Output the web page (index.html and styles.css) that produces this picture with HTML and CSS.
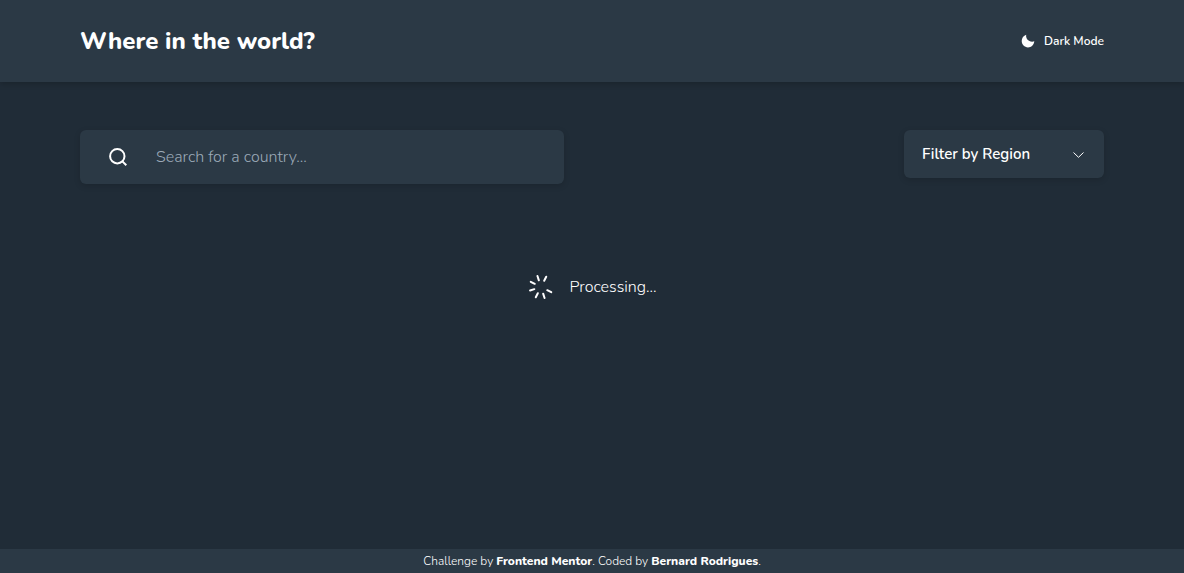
FILE: index.html
```html
<!DOCTYPE html>
<html lang="en">
<head>
<meta charset="utf-8">
<meta name="viewport" content="width=device-width, initial-scale=1">
<title>Where in the world?</title>
<link rel="stylesheet" href="styles.css">
</head>
<body class="page">
<header class="header">
  <h1 class="title">Where in the world?</h1>
  <button class="mode" type="button">
    <svg class="mode-icon" viewBox="0 0 14 14" aria-hidden="true"><path fill="currentColor" d="M5.200.8C4.700 3.300 5.800 5.800 8 6.800C9.800 7.800 11.600 7.900 13.300 7.300C13 11 10.300 13.400 7 13.400C3.500 13.400.7 10.600.7 7.100C.7 4.200 2.600 1.600 5.200.8Z"/></svg>
    Dark Mode
  </button>
</header>
<main class="main">
  <div class="filters">
    <label class="search">
      <svg class="search-icon" viewBox="0 0 20 20" aria-hidden="true"><g fill="none" stroke="currentColor" stroke-width="2"><circle cx="9.300" cy="9.200" r="7.200"/><path d="M14.400 14.400L18.300 18.300"/></g></svg>
      <input class="search-input" type="text" placeholder="Search for a country..." aria-label="Search for a country">
    </label>
    <div class="region">
      <select class="region-select" aria-label="Filter by Region">
        <option>Filter by Region</option>
        <option>Africa</option>
        <option>Americas</option>
        <option>Asia</option>
        <option>Europe</option>
        <option>Oceania</option>
      </select>
      <svg class="region-icon" viewBox="0 0 12 12" aria-hidden="true"><path d="M1.500 4.500L6.500 9.300L11.500 4.500" fill="none" stroke="currentColor"/></svg>
    </div>
  </div>
  <div class="loading" role="status">
    <svg class="spinner" viewBox="-14 -14 28 28" aria-hidden="true">
      <g stroke="currentColor" stroke-width="2" stroke-linecap="round">
        <path d="M0-7V-11.500" transform="rotate(27)"/>
        <path d="M0-7V-11.500" transform="rotate(117)"/>
        <path d="M0-7V-11.500" transform="rotate(162)"/>
        <path d="M0-7V-11.500" transform="rotate(207)"/>
        <path d="M0-7V-11.500" transform="rotate(252)"/>
        <path d="M0-7V-11.500" transform="rotate(297)"/>
        <path d="M0-7V-11.500" transform="rotate(342)"/>
      </g>
    </svg>
    <span>Processing...</span>
  </div>
</main>
<footer class="footer">
  <p class="credit">Challenge by <a class="credit-link" href="#mentor">Frontend Mentor</a>. Coded by <a class="credit-link" href="#author">Bernard Rodrigues</a>.</p>
</footer>
</body>
</html>
```
FILE: styles.css
```css
*, *::before, *::after {
  box-sizing: border-box;
}

.page {
  display: flex;
  flex-direction: column;
  min-height: 100vh;
  margin: 0;
  background: #202c37;
  color: #fff;
  font: 300 16px/24px Nunito, Lato, sans-serif;
}

.header {
  display: flex;
  align-items: center;
  justify-content: space-between;
  padding: 25px 80px;
  background: #2b3945;
  box-shadow: 0 2px 6px rgba(0, 0, 0, 0.2);
}

.title {
  margin: 0;
  font-size: 24px;
  line-height: 32px;
  font-weight: 800;
}

.mode {
  display: flex;
  align-items: center;
  gap: 9px;
  padding: 0;
  border: 0;
  background: none;
  color: inherit;
  font: inherit;
  font-size: 12px;
  font-weight: 600;
}

.mode-icon {
  width: 14px;
  height: 14px;
}

.main {
  flex: 1;
  padding: 48px 80px;
}

.filters {
  display: flex;
  align-items: flex-start;
  justify-content: space-between;
  gap: 24px;
}

.search {
  display: flex;
  align-items: center;
  flex: 0 1 484px;
  gap: 28px;
  padding: 15px 28px;
  border-radius: 6px;
  background: #2b3945;
  box-shadow: 0 2px 6px rgba(0, 0, 0, 0.15);
}

.search-icon {
  flex: none;
  width: 20px;
  height: 20px;
}

.search-input {
  flex: 1;
  min-width: 0;
  height: 24px;
  padding: 0;
  border: 0;
  outline: 0;
  background: none;
  color: inherit;
  font: inherit;
}

.search-input::placeholder {
  color: #9ca9b8;
}

.region {
  display: grid;
  align-items: center;
  width: 200px;
  border-radius: 6px;
  background: #2b3945;
  box-shadow: 0 2px 6px rgba(0, 0, 0, 0.15);
}

.region-select {
  grid-area: 1 / 1;
  height: 48px;
  padding: 0 18px;
  border: 0;
  appearance: none;
  background: none;
  color: inherit;
  font: inherit;
  font-size: 15px;
  font-weight: 600;
}

.region-icon {
  grid-area: 1 / 1;
  justify-self: end;
  width: 12px;
  height: 12px;
  margin-right: 20px;
  pointer-events: none;
}

.loading {
  display: flex;
  align-items: center;
  justify-content: center;
  gap: 14px;
  padding-top: 89px;
}

.spinner {
  width: 28px;
  height: 28px;
}

.footer {
  background: #2b3945;
  text-align: center;
}

.credit {
  margin: 0;
  font-size: 12px;
  line-height: 24px;
}

.credit-link {
  color: inherit;
  font-weight: 800;
  text-decoration: none;
}
```
